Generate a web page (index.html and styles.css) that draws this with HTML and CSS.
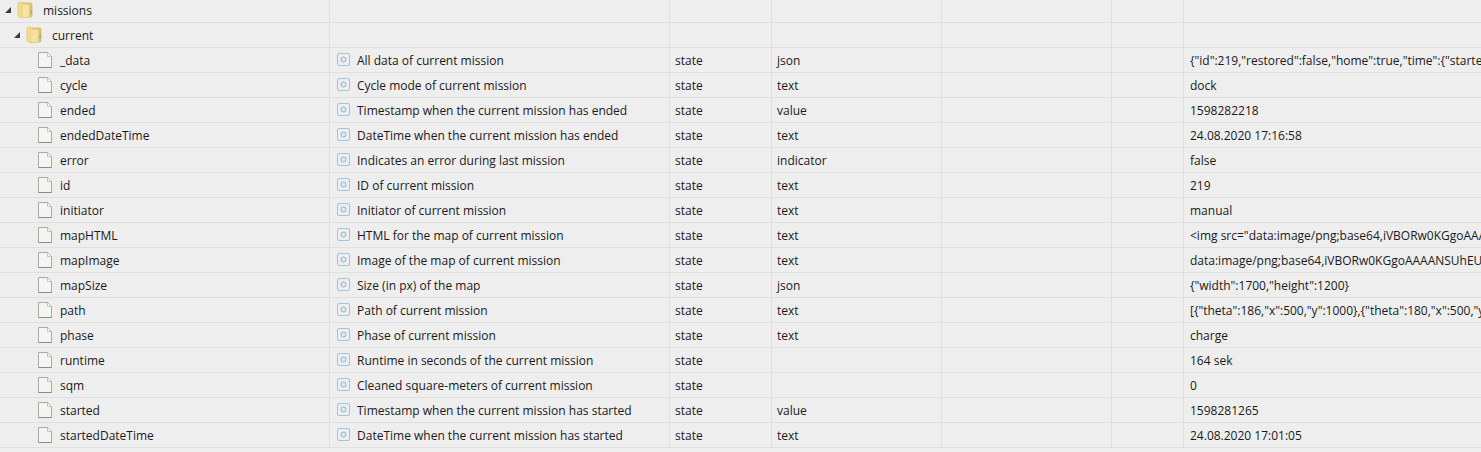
FILE: index.html
```html
<!DOCTYPE html>
<html>
<head>
    <meta charset="UTF-8">
    <title>objects</title>
    <link rel="stylesheet" href="styles.css">
</head>

<body>
    <svg class="defs" width="0" height="0">
        <symbol id="icoFolder" viewBox="0 0 16 18">
            <path d="M1 2.5C1 1.5 2 1 3 1L5 1.5C6 1.8 6 3 6 3L6 16.5C6 17 5 17 4 16.5L2 15.5C1.3 15.2 1 14.5 1 14Z" fill="#f3dc8a" stroke="#d9bd62" stroke-width=".6"/>
            <path d="M6 2L13.5 2C14.5 2 15 2.6 15 3.4L15 14.5C15 15.6 14.4 16 13.5 16L6 16Z" fill="#e6c566" stroke="#cfae52" stroke-width=".6"/>
            <path d="M5 3L11 3.2C12 3.4 12.4 4 12.4 5L12.4 14.8C12.4 15.6 12 16.5 11 16.5L5.5 16.5C5 16.5 4.6 16 4.6 15.5L4.6 4Z" fill="#f5e3a0" stroke="#dcc26e" stroke-width=".5"/>
            <rect x="13.4" y="9.5" width="1.6" height="3" fill="#6fb2d8"/>
        </symbol>
        <symbol id="icoFile" viewBox="0 0 14 16">
            <path d="M.5.5H9.5L13.5 4.5V15.5H.5Z" fill="#f4f6f1" stroke="#a9a9a6"/>
            <path d="M9.5.5V4.5H13.5Z" fill="#fff" stroke="#b5b5b2" stroke-width=".8"/>
            <path d="M.5 15.5H13.5" stroke="#8a8a88"/>
        </symbol>
        <symbol id="icoState" viewBox="0 0 14 14">
            <rect x=".5" y=".5" width="12" height="12" rx="1.5" fill="#e9eff2" stroke="#a9c3d2"/>
            <circle cx="6.5" cy="6.5" r="2.5" fill="#e3e8ea" stroke="#98b0bf"/>
        </symbol>
    </svg>

    <div class="objTable">

        <div class="row">
            <div class="cell nameCell lvl1">
                <span class="arrow"></span>
                <svg class="icoFolder"><use href="#icoFolder"/></svg>
                <span class="objName">missions</span>
            </div>
            <div class="cell"></div><div class="cell"></div><div class="cell"></div><div class="cell"></div><div class="cell"></div><div class="cell"></div>
        </div>

        <div class="row">
            <div class="cell nameCell lvl2">
                <span class="arrow"></span>
                <svg class="icoFolder"><use href="#icoFolder"/></svg>
                <span class="objName">current</span>
            </div>
            <div class="cell"></div><div class="cell"></div><div class="cell"></div><div class="cell"></div><div class="cell"></div><div class="cell"></div>
        </div>

        <div class="row">
            <div class="cell nameCell lvl3"><svg class="icoFile"><use href="#icoFile"/></svg><span class="objName">_data</span></div>
            <div class="cell descCell"><svg class="icoState"><use href="#icoState"/></svg>All data of current mission</div>
            <div class="cell">state</div>
            <div class="cell">json</div>
            <div class="cell"></div>
            <div class="cell"></div>
            <div class="cell valCell">{"id":219,"restored":false,"home":true,"time":{"started":1598281265}}</div>
        </div>
        <div class="row">
            <div class="cell nameCell lvl3"><svg class="icoFile"><use href="#icoFile"/></svg><span class="objName">cycle</span></div>
            <div class="cell descCell"><svg class="icoState"><use href="#icoState"/></svg>Cycle mode of current mission</div>
            <div class="cell">state</div>
            <div class="cell">text</div>
            <div class="cell"></div>
            <div class="cell"></div>
            <div class="cell valCell">dock</div>
        </div>
        <div class="row">
            <div class="cell nameCell lvl3"><svg class="icoFile"><use href="#icoFile"/></svg><span class="objName">ended</span></div>
            <div class="cell descCell"><svg class="icoState"><use href="#icoState"/></svg>Timestamp when the current mission has ended</div>
            <div class="cell">state</div>
            <div class="cell">value</div>
            <div class="cell"></div>
            <div class="cell"></div>
            <div class="cell valCell">1598282218</div>
        </div>
        <div class="row">
            <div class="cell nameCell lvl3"><svg class="icoFile"><use href="#icoFile"/></svg><span class="objName">endedDateTime</span></div>
            <div class="cell descCell"><svg class="icoState"><use href="#icoState"/></svg>DateTime when the current mission has ended</div>
            <div class="cell">state</div>
            <div class="cell">text</div>
            <div class="cell"></div>
            <div class="cell"></div>
            <div class="cell valCell">24.08.2020 17:16:58</div>
        </div>
        <div class="row">
            <div class="cell nameCell lvl3"><svg class="icoFile"><use href="#icoFile"/></svg><span class="objName">error</span></div>
            <div class="cell descCell"><svg class="icoState"><use href="#icoState"/></svg>Indicates an error during last mission</div>
            <div class="cell">state</div>
            <div class="cell">indicator</div>
            <div class="cell"></div>
            <div class="cell"></div>
            <div class="cell valCell">false</div>
        </div>
        <div class="row">
            <div class="cell nameCell lvl3"><svg class="icoFile"><use href="#icoFile"/></svg><span class="objName">id</span></div>
            <div class="cell descCell"><svg class="icoState"><use href="#icoState"/></svg>ID of current mission</div>
            <div class="cell">state</div>
            <div class="cell">text</div>
            <div class="cell"></div>
            <div class="cell"></div>
            <div class="cell valCell">219</div>
        </div>
        <div class="row">
            <div class="cell nameCell lvl3"><svg class="icoFile"><use href="#icoFile"/></svg><span class="objName">initiator</span></div>
            <div class="cell descCell"><svg class="icoState"><use href="#icoState"/></svg>Initiator of current mission</div>
            <div class="cell">state</div>
            <div class="cell">text</div>
            <div class="cell"></div>
            <div class="cell"></div>
            <div class="cell valCell">manual</div>
        </div>
        <div class="row">
            <div class="cell nameCell lvl3"><svg class="icoFile"><use href="#icoFile"/></svg><span class="objName">mapHTML</span></div>
            <div class="cell descCell"><svg class="icoState"><use href="#icoState"/></svg>HTML for the map of current mission</div>
            <div class="cell">state</div>
            <div class="cell">text</div>
            <div class="cell"></div>
            <div class="cell"></div>
            <div class="cell valCell">&lt;img src="data:image/png;base64,iVBORw0KGgoAAAANSUhEUgAAB</div>
        </div>
        <div class="row">
            <div class="cell nameCell lvl3"><svg class="icoFile"><use href="#icoFile"/></svg><span class="objName">mapImage</span></div>
            <div class="cell descCell"><svg class="icoState"><use href="#icoState"/></svg>Image of the map of current mission</div>
            <div class="cell">state</div>
            <div class="cell">text</div>
            <div class="cell"></div>
            <div class="cell"></div>
            <div class="cell valCell">data:image/png;base64,iVBORw0KGgoAAAANSUhEUgAABqQAAA</div>
        </div>
        <div class="row">
            <div class="cell nameCell lvl3"><svg class="icoFile"><use href="#icoFile"/></svg><span class="objName">mapSize</span></div>
            <div class="cell descCell"><svg class="icoState"><use href="#icoState"/></svg>Size (in px) of the map</div>
            <div class="cell">state</div>
            <div class="cell">json</div>
            <div class="cell"></div>
            <div class="cell"></div>
            <div class="cell valCell">{"width":1700,"height":1200}</div>
        </div>
        <div class="row">
            <div class="cell nameCell lvl3"><svg class="icoFile"><use href="#icoFile"/></svg><span class="objName">path</span></div>
            <div class="cell descCell"><svg class="icoState"><use href="#icoState"/></svg>Path of current mission</div>
            <div class="cell">state</div>
            <div class="cell">text</div>
            <div class="cell"></div>
            <div class="cell"></div>
            <div class="cell valCell">[{"theta":186,"x":500,"y":1000},{"theta":180,"x":500,"y":1000}]</div>
        </div>
        <div class="row">
            <div class="cell nameCell lvl3"><svg class="icoFile"><use href="#icoFile"/></svg><span class="objName">phase</span></div>
            <div class="cell descCell"><svg class="icoState"><use href="#icoState"/></svg>Phase of current mission</div>
            <div class="cell">state</div>
            <div class="cell">text</div>
            <div class="cell"></div>
            <div class="cell"></div>
            <div class="cell valCell">charge</div>
        </div>
        <div class="row">
            <div class="cell nameCell lvl3"><svg class="icoFile"><use href="#icoFile"/></svg><span class="objName">runtime</span></div>
            <div class="cell descCell"><svg class="icoState"><use href="#icoState"/></svg>Runtime in seconds of the current mission</div>
            <div class="cell">state</div>
            <div class="cell"></div>
            <div class="cell"></div>
            <div class="cell"></div>
            <div class="cell valCell">164 sek</div>
        </div>
        <div class="row">
            <div class="cell nameCell lvl3"><svg class="icoFile"><use href="#icoFile"/></svg><span class="objName">sqm</span></div>
            <div class="cell descCell"><svg class="icoState"><use href="#icoState"/></svg>Cleaned square-meters of current mission</div>
            <div class="cell">state</div>
            <div class="cell"></div>
            <div class="cell"></div>
            <div class="cell"></div>
            <div class="cell valCell">0</div>
        </div>
        <div class="row">
            <div class="cell nameCell lvl3"><svg class="icoFile"><use href="#icoFile"/></svg><span class="objName">started</span></div>
            <div class="cell descCell"><svg class="icoState"><use href="#icoState"/></svg>Timestamp when the current mission has started</div>
            <div class="cell">state</div>
            <div class="cell">value</div>
            <div class="cell"></div>
            <div class="cell"></div>
            <div class="cell valCell">1598281265</div>
        </div>
        <div class="row">
            <div class="cell nameCell lvl3"><svg class="icoFile"><use href="#icoFile"/></svg><span class="objName">startedDateTime</span></div>
            <div class="cell descCell"><svg class="icoState"><use href="#icoState"/></svg>DateTime when the current mission has started</div>
            <div class="cell">state</div>
            <div class="cell">text</div>
            <div class="cell"></div>
            <div class="cell"></div>
            <div class="cell valCell">24.08.2020 17:01:05</div>
        </div>

    </div>
</body>
</html>
```

FILE: styles.css
```css
/* 전체 설정 */
html,
body {
    margin: 0;
    padding: 0;
    height: 100%;
    overflow: hidden;
    background-color: #eeeeee;
}

.defs {
    display: block;
    height: 0;
}

/* the list is scrolled by 2px, so the first row looks cut at the top */
.objTable {
    margin-top: -2px;
    font-family: "Open Sans", "Noto Sans", sans-serif;
    font-size: 12px;
    color: #1a1a1a;
}

.row {
    display: grid;
    grid-template-columns: 330px 340px 102px 170px 170px 72px 297px;
    height: 25px;
    box-sizing: border-box;
    border-bottom: 1px solid #e0e0e0;
}

.cell {
    display: flex;
    align-items: center;
    box-sizing: border-box;
    border-right: 1px solid #e0e0e0;
    padding-left: 5px;
    overflow: hidden;
    white-space: nowrap;
}

.cell:last-child {
    border-right: 0;
}

.nameCell {
    padding-left: 0;
}

.lvl1 {
    padding-left: 5px;
}

.lvl2 {
    padding-left: 14px;
}

.lvl3 {
    padding-left: 38px;
}

.arrow {
    width: 0;
    height: 0;
    margin-right: 6px;
    border-left: 6px solid transparent;
    border-bottom: 6px solid #3c3c3c;
}

.icoFolder {
    width: 16px;
    height: 18px;
    margin-right: 10px;
}

.icoFile {
    width: 14px;
    height: 16px;
    margin-right: 8px;
}

.icoState {
    width: 14px;
    height: 14px;
    margin-left: 2px;
    margin-right: 6px;
}

.valCell {
    padding-left: 6px;
}
```
